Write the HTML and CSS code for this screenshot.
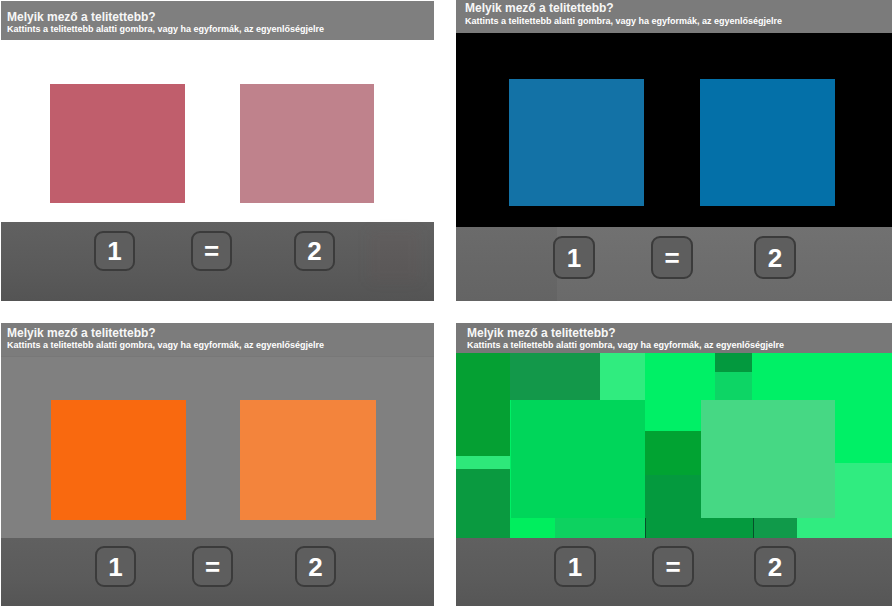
FILE: index.html
```html
<!DOCTYPE html>
<html lang="hu">
<head>
<meta charset="utf-8">
<title>Telítettség</title>
<link rel="stylesheet" href="styles.css">
</head>
<body>
<main class="sheet">
  <section class="panel p1">
    <header class="head">
      <h1 class="title">Melyik mező a telitettebb?</h1>
      <p class="sub">Kattints a telitettebb alatti gombra, vagy ha egyformák, az egyenlőségjelre</p>
    </header>
    <div class="stage">
      <div class="swatches">
        <div class="swatch a"></div>
        <div class="swatch b"></div>
      </div>
    </div>
    <div class="bar">
      <button class="key k1">1</button>
      <button class="key keq">=</button>
      <button class="key k2">2</button>
      <span class="ghost"></span>
    </div>
  </section>

  <section class="panel p2">
    <header class="head">
      <h1 class="title">Melyik mező a telitettebb?</h1>
      <p class="sub">Kattints a telitettebb alatti gombra, vagy ha egyformák, az egyenlőségjelre</p>
    </header>
    <div class="stage">
      <div class="swatches">
        <div class="swatch a"></div>
        <div class="swatch b"></div>
      </div>
    </div>
    <div class="bar">
      <span class="shade"></span>
      <button class="key k1">1</button>
      <button class="key keq">=</button>
      <button class="key k2">2</button>
    </div>
  </section>

  <section class="panel p3">
    <header class="head">
      <h1 class="title">Melyik mező a telitettebb?</h1>
      <p class="sub">Kattints a telitettebb alatti gombra, vagy ha egyformák, az egyenlőségjelre</p>
    </header>
    <div class="stage">
      <div class="swatches">
        <div class="swatch a"></div>
        <div class="swatch b"></div>
      </div>
    </div>
    <div class="bar">
      <button class="key k1">1</button>
      <button class="key keq">=</button>
      <button class="key k2">2</button>
    </div>
  </section>

  <section class="panel p4">
    <header class="head">
      <h1 class="title">Melyik mező a telitettebb?</h1>
      <p class="sub">Kattints a telitettebb alatti gombra, vagy ha egyformák, az egyenlőségjelre</p>
    </header>
    <div class="stage">
      <svg class="mosaic" width="436" height="185" viewBox="0 0 436 185" aria-hidden="true">
        <rect x="0" y="0" width="436" height="185" fill="#00f066"/>
        <rect x="0" y="0" width="54" height="103" fill="#05a033"/>
        <rect x="0" y="103" width="54" height="13" fill="#2ee87a"/>
        <rect x="0" y="116" width="54" height="69" fill="#0a9a40"/>
        <rect x="54" y="0" width="90" height="47" fill="#13984a"/>
        <rect x="144" y="0" width="45" height="47" fill="#30ec7f"/>
        <rect x="54" y="165" width="45" height="20" fill="#00ee5e"/>
        <rect x="99" y="165" width="90" height="20" fill="#0dd260"/>
        <rect x="189" y="78" width="56" height="44" fill="#01a332"/>
        <rect x="189" y="122" width="108" height="63" fill="#049a3e"/>
        <rect x="297" y="165" width="44" height="20" fill="#109a4a"/>
        <rect x="341" y="110" width="95" height="75" fill="#30ec80"/>
        <rect x="259" y="0" width="37" height="19" fill="#03993e"/>
        <rect x="259" y="19" width="37" height="28" fill="#0dd565"/>
        <rect x="189" y="165" width="1" height="20" fill="#06502a"/>
        <rect x="297" y="165" width="1" height="20" fill="#06502a"/>
      </svg>
      <div class="swatches">
        <div class="swatch a"></div>
        <div class="swatch b"></div>
      </div>
    </div>
    <div class="bar">
      <button class="key k1">1</button>
      <button class="key keq">=</button>
      <button class="key k2">2</button>
    </div>
  </section>
</main>
</body>
</html>
```

FILE: styles.css
```css
* {
  box-sizing: border-box;
}

html, body {
  margin: 0;
  padding: 0;
  background: #ffffff;
}

body {
  width: 893px;
  height: 607px;
  overflow: hidden;
  font-family: "Liberation Sans", Arial, sans-serif;
}

.sheet {
  display: grid;
  grid-template-columns: 433px 436px;
  grid-template-rows: 301px 283px;
  column-gap: 22px;
  row-gap: 22px;
  padding-left: 1px;
}

.panel {
  display: flex;
  flex-direction: column;
  overflow: hidden;
}

.head {
  color: #ffffff;
  flex: none;
}

.title {
  margin: 0;
  font-size: 12px;
  line-height: 14px;
  font-weight: bold;
  color: #f7f7f7;
}

.sub {
  margin: 0;
  font-size: 9px;
  line-height: 11px;
  font-weight: bold;
  color: #ffffff;
}

.stage {
  flex: none;
  position: relative;
}

.swatches {
  position: relative;
  display: flex;
}

.swatch {
  flex: none;
}

.bar {
  flex: none;
  position: relative;
  display: flex;
  align-items: flex-start;
}

.key {
  flex: none;
  margin: 0;
  padding: 0;
  border: 2px solid #3b3b3b;
  border-radius: 9px;
  background: #5e5e5e;
  color: #ffffff;
  font-family: "Liberation Sans", Arial, sans-serif;
  font-weight: bold;
  font-size: 26px;
  line-height: 1;
  display: flex;
  align-items: center;
  justify-content: center;
  position: relative;
}

/* ---------- panel 1 ---------- */
.p1 {
  margin-top: 1px;
  height: 300px;
}
.p1 .head {
  height: 39px;
  background: #7f7f7f;
  padding: 9px 0 0 6px;
}
.p1 .stage {
  height: 182px;
  background: #ffffff;
  padding: 44px 0 0 49px;
}
.p1 .swatches { gap: 55px; }
.p1 .swatch { height: 119px; }
.p1 .swatch.a { width: 135px; background: #c05e6c; }
.p1 .swatch.b { width: 134px; background: #bf828c; }
.p1 .bar {
  height: 79px;
  background: linear-gradient(#616161, #5a5a5a 60%, #545454);
  padding: 9px 0 0 93px;
}
.p1 .key { width: 41px; height: 40px; }
.p1 .keq { margin-left: 56px; }
.p1 .k2 { margin-left: 62px; }
.p1 .ghost {
  position: absolute;
  left: 368px;
  top: 8px;
  width: 50px;
  height: 52px;
  background: rgba(120, 80, 80, 0.08);
  filter: blur(6px);
}

/* ---------- panel 2 ---------- */
.p2 {
  height: 301px;
}
.p2 .head {
  height: 33px;
  background: #7b7b7b;
  padding: 1px 0 0 9px;
}
.p2 .sub { margin-top: 1px; }
.p2 .stage {
  height: 194px;
  background: #000000;
  padding: 46px 0 0 53px;
}
.p2 .swatches { gap: 56px; }
.p2 .swatch { height: 127px; width: 135px; }
.p2 .swatch.a { background: #1372a6; }
.p2 .swatch.b { background: #0470a8; }
.p2 .bar {
  height: 74px;
  background: linear-gradient(#717171, #6c6c6c 70%, #6a6a6a);
  padding: 9px 0 0 97px;
}
.p2 .shade {
  position: absolute;
  left: 0;
  top: 0;
  width: 101px;
  height: 74px;
  background: rgba(0, 0, 0, 0.05);
}
.p2 .key { width: 42px; height: 43px; }
.p2 .keq { margin-left: 56px; }
.p2 .k2 { margin-left: 61px; }

/* ---------- panel 3 ---------- */
.p3 {
  height: 283px;
}
.p3 .head {
  height: 34px;
  background: #7c7c7c;
  padding: 3px 0 0 6px;
  border-bottom: 1px solid #787878;
}
.p3 .stage {
  height: 181px;
  background: #808080;
  padding: 43px 0 0 50px;
}
.p3 .swatches { gap: 54px; }
.p3 .swatch { height: 120px; }
.p3 .swatch.a { width: 135px; background: #f9690f; }
.p3 .swatch.b { width: 136px; background: #f3843c; }
.p3 .bar {
  height: 68px;
  background: linear-gradient(#606060, #5b5b5b 60%, #555555);
  padding: 8px 0 0 94px;
}
.p3 .key { width: 41px; height: 41px; }
.p3 .keq { margin-left: 56px; }
.p3 .k2 { margin-left: 62px; }

/* ---------- panel 4 ---------- */
.p4 {
  height: 283px;
}
.p4 .head {
  height: 30px;
  background: #787878;
  padding: 3px 0 0 11px;
}
.p4 .stage {
  height: 185px;
  background: #00f066;
  padding: 47px 0 0 55px;
}
.p4 .mosaic {
  position: absolute;
  left: 0;
  top: 0;
  display: block;
}
.p4 .swatches { gap: 56px; }
.p4 .swatch { height: 118px; width: 134px; }
.p4 .swatch.a { background: #00d65a; }
.p4 .swatch.b { background: #46d884; }
.p4 .bar {
  height: 68px;
  background: linear-gradient(#606060, #5b5b5b 60%, #565656);
  padding: 8px 0 0 98px;
}
.p4 .key { width: 42px; height: 41px; }
.p4 .keq { margin-left: 56px; }
.p4 .k2 { margin-left: 60px; }
```
